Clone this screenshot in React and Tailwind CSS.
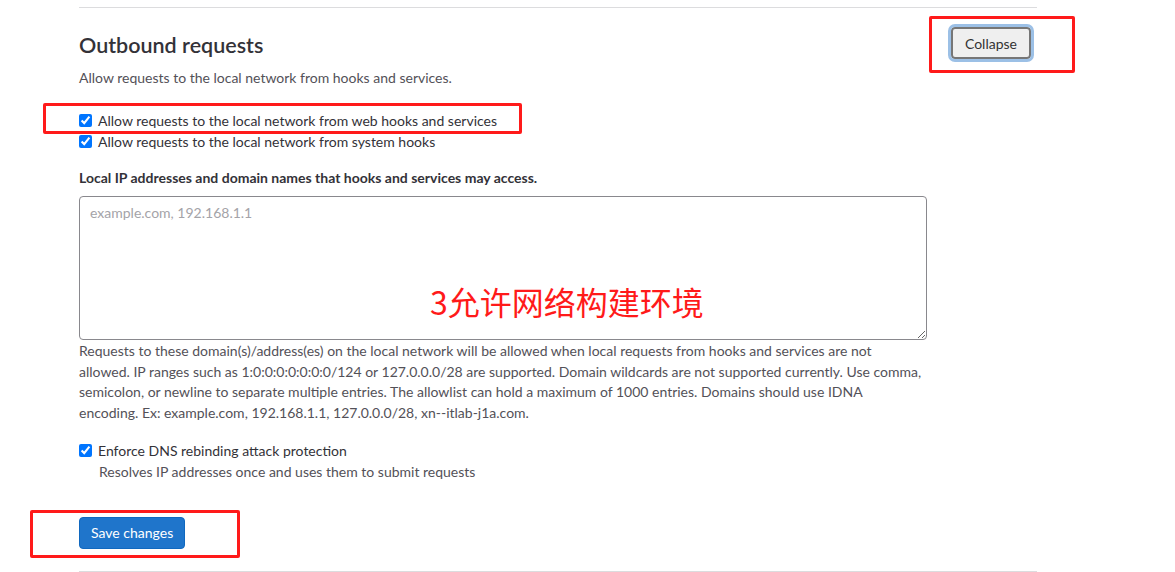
import { useState } from 'react'

const font = { fontFamily: 'Lato, "Noto Sans CJK SC", sans-serif' }

function Check({ checked, onChange, children }) {
  return (
    <label className="flex items-center gap-[6px] h-[21px] text-[14px] text-[#333238]">
      <input type="checkbox" checked={checked} onChange={onChange}
        className="w-[13px] h-[13px] m-0 accent-[#0075ff]" />
      <span>{children}</span>
    </label>
  )
}

export default function App() {
  const [web, setWeb] = useState(true)
  const [system, setSystem] = useState(true)
  const [dns, setDns] = useState(true)

  return (
    <div className="w-[1175px] h-[572px] bg-white relative overflow-hidden" style={font}>
      <div className="ml-[79px] w-[958px] pt-[7px]">
        <div className="border-t border-[#dcdcde]" />

        {/* Header */}
        <div className="flex items-start justify-between">
          <div className="pt-[24px]">
            <h2 className="text-[21.5px] leading-[26px] font-semibold text-[#333238]">Outbound requests</h2>
            <p className="mt-[10px] text-[14px] leading-[20px] text-[#535158]">
              Allow requests to the local network from hooks and services.
            </p>
          </div>
          <button className="mt-[19px] mr-[6px] h-[32px] px-[12px] text-[14px] text-[#333] bg-[#efefef] border-2 border-[#767676] rounded-[4px] outline-[3px] outline-[#9cc0e6]">
            Collapse
          </button>
        </div>

        {/* Checkboxes */}
        <div className="mt-[22px] flex flex-col">
          <Check checked={web} onChange={() => setWeb(!web)}>Allow requests to the local network from web hooks and services</Check>
          <Check checked={system} onChange={() => setSystem(!system)}>Allow requests to the local network from system hooks</Check>
        </div>

        {/* Allowlist */}
        <div className="mt-[16px] w-[848px]">
          <label className="block text-[14px] leading-[20px] font-bold text-[#333238]">
            Local IP addresses and domain names that hooks and services may access.
          </label>
          <textarea placeholder="example.com, 192.168.1.1"
            className="mt-[8px] block w-[848px] h-[144px] px-[10px] py-[6px] text-[14px] leading-[20px] border border-[#89888d] rounded-[4px] placeholder:text-[#a4a3a8]" />
          <p className="mt-[1px] text-[14px] leading-[20.7px] text-[#535158] w-[940px]">
            Requests to these domain(s)/address(es) on the local network will be allowed when local requests from hooks and services are not<br />
            allowed. IP ranges such as 1:0:0:0:0:0:0:0/124 or 127.0.0.0/28 are supported. Domain wildcards are not supported currently. Use comma,<br />
            semicolon, or newline to separate multiple entries. The allowlist can hold a maximum of 1000 entries. Domains should use IDNA<br />
            encoding. Ex: example.com, 192.168.1.1, 127.0.0.0/28, xn--itlab-j1a.com.
          </p>
        </div>

        {/* DNS */}
        <div className="mt-[16px]">
          <Check checked={dns} onChange={() => setDns(!dns)}>Enforce DNS rebinding attack protection</Check>
          <p className="ml-[20px] text-[14px] leading-[21px] text-[#535158]">
            Resolves IP addresses once and uses them to submit requests
          </p>
        </div>

        <button className="mt-[35px] h-[32px] px-[11px] text-[14px] text-white bg-[#1f75cb] border border-[#1068bf] rounded-[4px]">
          Save changes
        </button>

        <div className="mt-[22px] border-t border-[#dcdcde]" />
      </div>

      {/* annotations */}
      <div className="absolute left-[929px] top-[16px] w-[146px] h-[57px] border-[3px] border-[#ff1a1a] rounded-[2px]" />
      <div className="absolute left-[43px] top-[103px] w-[479px] h-[31px] border-[3px] border-[#ff1a1a] rounded-[2px]" />
      <div className="absolute left-[30px] top-[510px] w-[210px] h-[48px] border-[3px] border-[#ff1a1a] rounded-[2px]" />
      <div className="absolute left-[430px] top-[282px] text-[32px] leading-[38px] text-[#ff1a1a]"
        style={{ fontFamily: '"Noto Sans CJK SC", sans-serif' }}>
        3允许网络构建环境
      </div>
    </div>
  )
}
